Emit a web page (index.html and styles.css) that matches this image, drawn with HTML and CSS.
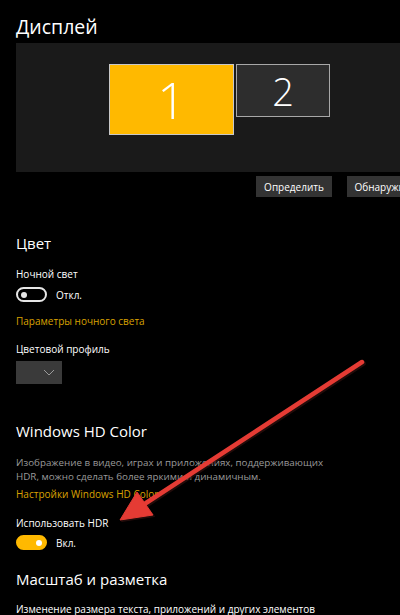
FILE: index.html
```html
<!DOCTYPE html>
<html lang="ru">
<head>
    <meta charset="UTF-8">
    <meta name="viewport" content="width=device-width, initial-scale=1.0">
    <title>Дисплей</title>
    <link rel="stylesheet" href="styles.css">
</head>
<body>
    <div id="page">
        <h1 id="page-title">Дисплей</h1>

        <div id="arrange">
            <div class="monitor monitor-main">1</div>
            <div class="monitor monitor-second">2</div>
        </div>
        <div id="arrange-actions">
            <button class="btn">Определить</button>
            <button class="btn">Обнаружить</button>
        </div>

        <h2 class="section-title title-color">Цвет</h2>
        <div class="label">Ночной свет</div>
        <div class="toggle-row">
            <span class="toggle"></span>
            <span>Откл.</span>
        </div>
        <a class="link">Параметры ночного света</a>
        <div class="label label-profile">Цветовой профиль</div>
        <div class="dropdown">
            <svg width="12" height="7" viewBox="0 0 12 7"><path d="M1 1l5 5 5-5" fill="none" stroke="#9a9a9a" stroke-width="1"/></svg>
        </div>

        <h2 class="section-title title-hd">Windows HD Color</h2>
        <p class="desc">Изображение в видео, играх и приложениях, поддерживающих HDR, можно сделать более яркими и динамичным.</p>
        <a class="link link-hd">Настройки Windows HD Color</a>
        <div class="label label-hdr">Использовать HDR</div>
        <div class="toggle-row toggle-row-hdr">
            <span class="toggle on"></span>
            <span>Вкл.</span>
        </div>

        <h2 class="section-title title-scale">Масштаб и разметка</h2>
        <div class="label label-scale">Изменение размера текста, приложений и других элементов</div>

        <!-- стрелка поверх скриншота -->
        <svg id="arrow" width="400" height="615" viewBox="0 0 400 615">
            <g transform="translate(1.5 1.5)" fill="#3a1412" stroke="#3a1412" opacity="0.6">
                <line x1="362" y1="362" x2="146" y2="503" stroke-width="4.5" stroke-linecap="round"/>
                <polygon points="120,520 137,492 153,515"/>
            </g>
            <g fill="#e53b34" stroke="#e53b34">
                <line x1="362" y1="362" x2="146" y2="503" stroke-width="4.5" stroke-linecap="round"/>
                <polygon points="120,520 137,492 153,515" stroke-width="1" stroke-linejoin="round"/>
            </g>
        </svg>
    </div>
</body>
</html>
```

FILE: styles.css
```css
body {
    margin: 0;
    background: #000;
    color: #fff;
    font-family: 'Open Sans', 'Noto Sans', sans-serif;
}

#page {
    position: relative;
    width: 400px;
    height: 615px;
    overflow: hidden;
    padding-left: 16px;
    box-sizing: border-box;
}

#page-title {
    margin: 0;
    padding-top: 14px;
    font-size: 19.5px;
    line-height: 26px;
    font-weight: 400;
}

#arrange {
    margin-top: 3px;
    height: 129px;
    width: 400px;
    box-sizing: border-box;
    background: #1a1a1a;
    display: flex;
    align-items: flex-start;
    gap: 2px;
    padding: 21px 0 0 93px;
}

.monitor {
    border: 1px solid #c8c8c8;
    box-sizing: border-box;
    display: flex;
    justify-content: center;
    align-items: center;
    font-weight: 300;
    color: #fff;
}

.monitor-main {
    width: 125px;
    height: 71px;
    background: #ffb900;
    font-size: 50px;
}

.monitor-second {
    width: 94px;
    height: 53px;
    background: #2d2d2d;
    border-color: #a8a8a8;
    font-size: 38px;
}

#arrange-actions {
    margin-top: 4px;
    display: flex;
    gap: 15px;
    padding-left: 240px;
    white-space: nowrap;
}

.btn {
    flex-shrink: 0;
    height: 21px;
    width: 76px;
    padding: 0;
    border: none;
    background: #333;
    color: #fff;
    font-family: inherit;
    font-size: 10px;
}

.section-title {
    margin: 0;
    font-size: 15px;
    line-height: 22px;
    font-weight: 400;
}

.title-color {
    margin-top: 35px;
}

.title-hd {
    margin-top: 36px;
}

.title-scale {
    margin-top: 18px;
}

.label {
    font-size: 10px;
    line-height: 16px;
    margin-top: 12px;
}

.label-hdr {
    margin-top: 13px;
}

.label-scale {
    margin-top: 11px;
    white-space: nowrap;
}

.toggle-row {
    margin-top: 5px;
    height: 15px;
    display: flex;
    align-items: center;
    gap: 9px;
    font-size: 10px;
}

.toggle-row-hdr {
    margin-top: 4px;
}

.toggle {
    position: relative;
    width: 31px;
    height: 15px;
    box-sizing: border-box;
    border: 2px solid #e6e6e6;
    border-radius: 8px;
}

.toggle::after {
    content: "";
    position: absolute;
    top: 2.5px;
    left: 3px;
    width: 6px;
    height: 6px;
    border-radius: 50%;
    background: #e6e6e6;
}

.toggle.on {
    background: #ffb900;
    border-color: #ffb900;
}

.toggle.on::after {
    left: auto;
    right: 3px;
    background: #fff;
}

.link {
    display: block;
    margin-top: 11px;
    font-size: 10px;
    line-height: 16px;
    color: #d9a200;
}

.link-hd {
    margin-top: 2px;
}

.dropdown {
    margin-top: 4px;
    width: 46px;
    height: 23px;
    background: #3a3a3a;
    display: flex;
    align-items: center;
    justify-content: flex-end;
    padding-right: 7px;
    box-sizing: border-box;
}

.desc {
    margin: 14px 0 0;
    width: 322px;
    font-size: 9.8px;
    line-height: 14px;
    color: #9a9a9a;
}

#arrow {
    position: absolute;
    top: 0;
    left: 0;
    pointer-events: none;
}
```
